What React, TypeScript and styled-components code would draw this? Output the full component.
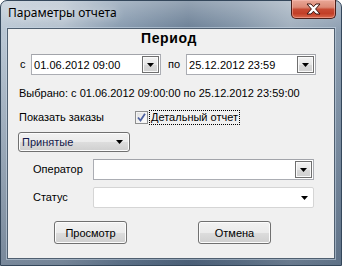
import React from "react"
import styled, { createGlobalStyle } from "styled-components"

const Global = createGlobalStyle`
  html, body {
    margin: 0;
    padding: 0;
    background: #ffffff;
  }
  body {
    font-family: "Liberation Sans", Arial, sans-serif;
    font-size: 11px;
    color: #000;
  }
`

const Window = styled.div`
  box-sizing: border-box;
  width: 342px;
  height: 266px;
  display: flex;
  flex-direction: column;
  padding: 0 6px 6px 6px;
  border: 1px solid #34475b;
  border-radius: 7px 7px 0 0;
  background:
    linear-gradient(to bottom, rgba(255, 255, 255, 0.3) 0%, rgba(255, 255, 255, 0) 12%),
    linear-gradient(to bottom, rgba(40, 60, 85, 0) 15%, rgba(40, 60, 85, 0.45) 100%),
    linear-gradient(
      to right,
      #b9c6d3 0%,
      #b2bfcc 18%,
      #8498ad 35%,
      #677c93 55%,
      #7d90a4 70%,
      #9dacbb 85%,
      #8b9db0 100%
    );
`

const TitleBar = styled.div`
  height: 27px;
  display: flex;
  justify-content: space-between;
  align-items: flex-start;
`

const Title = styled.div`
  font-family: "Noto Sans", "Open Sans", sans-serif;
  font-size: 12px;
  line-height: 16px;
  padding: 4px 0 0 1px;
  color: #000;
  text-shadow: 0 0 8px rgba(255, 255, 255, 0.9);
`

const CloseButton = styled.div`
  box-sizing: border-box;
  width: 45px;
  height: 19px;
  margin-top: -1px;
  margin-right: -1px;
  border: 1px solid #4a1e18;
  border-top: none;
  border-radius: 0 0 5px 5px;
  display: flex;
  align-items: center;
  justify-content: center;
  background: linear-gradient(
    to bottom,
    #e9a797 0%,
    #dc8a76 40%,
    #c74a33 52%,
    #c23f27 75%,
    #d8684c 100%
  );
  box-shadow: inset 0 0 0 1px rgba(255, 200, 190, 0.45);
`

const Client = styled.div`
  flex: 1;
  box-sizing: border-box;
  background: #f0f0f0;
  border: 1px solid #4f5f70;
  box-shadow: 0 0 0 1px rgba(200, 215, 230, 0.55);
  display: flex;
  flex-direction: column;
  padding: 1px 0 0 0;
`

const Heading = styled.div`
  font-weight: 700;
  font-size: 14px;
  line-height: 16px;
  letter-spacing: 0.6px;
  text-align: center;
  margin-left: -4px;
`

const Row = styled.div<{ $top: number; $left: number }>`
  display: flex;
  align-items: center;
  margin-top: ${(p) => p.$top}px;
  padding-left: ${(p) => p.$left}px;
`

const Label = styled.span<{ $width?: number }>`
  width: ${(p) => (p.$width ? `${p.$width}px` : "auto")};
  line-height: 13px;
`

const Combo = styled.div<{ $width: number }>`
  box-sizing: border-box;
  width: ${(p) => p.$width}px;
  height: 21px;
  background: #fff;
  border: 1px solid #abadb3;
  border-top-color: #a2a4aa;
  display: flex;
  align-items: center;
  padding: 0 1px 0 2px;
`

const ComboText = styled.span`
  flex: 1;
  font-size: 11px;
  letter-spacing: 0.05px;
`

const DropButton = styled.div`
  box-sizing: border-box;
  width: 17px;
  height: 17px;
  border: 1px solid #6f6f6f;
  box-shadow: inset 0 0 0 1px #fafafa;
  background: linear-gradient(to bottom, #f3f3f3 0%, #e6e6e6 50%, #d8d8d8 51%, #d0d0d0 100%);
  display: flex;
  align-items: center;
  justify-content: center;
`

const FlatCombo = styled.div<{ $width: number }>`
  box-sizing: border-box;
  width: ${(p) => p.$width}px;
  height: 21px;
  background: #fff;
  border: 1px solid #d5d5d5;
  border-radius: 2px;
  display: flex;
  align-items: center;
  justify-content: flex-end;
  padding-right: 5px;
`

const Gap = styled.span<{ $w: number }>`
  display: inline-block;
  width: ${(p) => p.$w}px;
`

const CheckWrap = styled.div`
  display: flex;
  align-items: center;
`

const CheckBox = styled.div`
  box-sizing: border-box;
  width: 13px;
  height: 13px;
  border: 1px solid #8e8f8f;
  background: linear-gradient(135deg, #dcdcdc 0%, #f4f4f4 60%, #ffffff 100%);
  box-shadow: inset 0 0 0 1px #f4f4f4;
  display: flex;
  align-items: center;
  justify-content: center;
`

const FocusLabel = styled.span`
  margin-left: 1px;
  padding: 0 1px;
  line-height: 13px;
  border: 1px dotted #000;
`

const PushButton = styled.div<{ $width: number; $height: number }>`
  box-sizing: border-box;
  width: ${(p) => p.$width}px;
  height: ${(p) => p.$height}px;
  border: 1px solid #707070;
  border-radius: 3px;
  background: linear-gradient(to bottom, #f2f2f2 0%, #ebebeb 50%, #dddddd 51%, #cfcfcf 100%);
  box-shadow: inset 0 0 0 1px #fcfcfc;
  display: flex;
  align-items: center;
`

const CenterText = styled.span`
  flex: 1;
  text-align: center;
`

const MenuText = styled.span`
  flex: 1;
  padding-left: 3px;
  color: #14184a;
`

const MenuArrow = styled.span`
  padding-right: 6px;
  display: flex;
`

const Arrow: React.FC = () => (
  <svg width="7" height="4" viewBox="0 0 7 4">
    <path d="M0 0 H7 L3.5 4 Z" fill="#000" />
  </svg>
)

const CloseIcon: React.FC = () => (
  <svg width="15" height="12" viewBox="0 0 15 12">
    <path
      d="M1 1 H5 L7.5 3.8 L10 1 H14 L9.6 6 L14 11 H10 L7.5 8.2 L5 11 H1 L5.4 6 Z"
      fill="#ffffff"
      stroke="#3b1510"
      strokeWidth="1"
      strokeLinejoin="round"
    />
  </svg>
)

const Check: React.FC = () => (
  <svg width="9" height="9" viewBox="0 0 9 9">
    <path d="M1 4.5 L3.5 7.5 L8 0.8" fill="none" stroke="#4d61a0" strokeWidth="1.8" />
  </svg>
)

const App: React.FC = () => {
  return (
    <>
      <Global />
      <Window>
        <TitleBar>
          <Title>Параметры отчета</Title>
          <CloseButton>
            <CloseIcon />
          </CloseButton>
        </TitleBar>
        <Client>
          <Heading>Период</Heading>
          <Row $top={8} $left={12}>
            <Label $width={11}>с</Label>
            <Combo $width={130}>
              <ComboText>01.06.2012 09:00</ComboText>
              <DropButton>
                <Arrow />
              </DropButton>
            </Combo>
            <Gap $w={7} />
            <Label $width={18}>по</Label>
            <Combo $width={130}>
              <ComboText>25.12.2012 23:59</ComboText>
              <DropButton>
                <Arrow />
              </DropButton>
            </Combo>
          </Row>
          <Row $top={12} $left={11}>
            <Label>Выбрано: с 01.06.2012 09:00:00 по 25.12.2012 23:59:00</Label>
          </Row>
          <Row $top={10} $left={11}>
            <Label $width={116}>Показать заказы</Label>
            <CheckWrap>
              <CheckBox>
                <Check />
              </CheckBox>
              <FocusLabel>Детальный отчет</FocusLabel>
            </CheckWrap>
          </Row>
          <Row $top={7} $left={10}>
            <PushButton $width={112} $height={20}>
              <MenuText>Принятые</MenuText>
              <MenuArrow>
                <Arrow />
              </MenuArrow>
            </PushButton>
          </Row>
          <Row $top={7} $left={25}>
            <Label $width={60}>Оператор</Label>
            <Combo $width={221}>
              <ComboText />
              <DropButton>
                <Arrow />
              </DropButton>
            </Combo>
          </Row>
          <Row $top={7} $left={25}>
            <Label $width={60}>Статус</Label>
            <FlatCombo $width={221}>
              <Arrow />
            </FlatCombo>
          </Row>
          <Row $top={13} $left={46}>
            <PushButton $width={73} $height={23}>
              <CenterText>Просмотр</CenterText>
            </PushButton>
            <Gap $w={71} />
            <PushButton $width={73} $height={23}>
              <CenterText>Отмена</CenterText>
            </PushButton>
          </Row>
        </Client>
      </Window>
    </>
  )
}

export default App
